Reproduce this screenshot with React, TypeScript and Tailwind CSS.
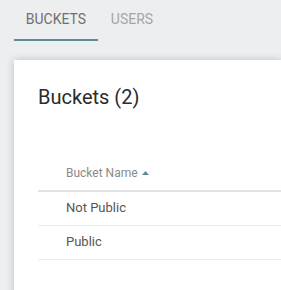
export default function App() {
  const rows = ["Not Public", "Public"];
  return (
    <div className="h-[290px] w-[281px] overflow-hidden bg-[#eceeef] font-['Roboto',sans-serif]">
      <div className="flex pl-[14px]">
        <div className="flex h-[41px] w-[84px] items-center justify-center border-b-2 border-[#5f8b96] text-[14px] text-[#707070]">
          BUCKETS
        </div>
        <div className="flex h-[41px] w-[68px] items-center justify-center pb-[2px] text-[14px] text-[#a6a6a6]">
          USERS
        </div>
      </div>
      <div className="ml-[14px] mt-[19px] h-[260px] bg-white pl-[24px] shadow-[0_0_8px_rgba(0,0,0,0.2)]">
        <h2 className="pt-[25px] text-[20px] leading-[24px] text-[#2b2b2b]">Buckets (2)</h2>
        <div className="mt-[50px]">
          <div className="flex h-[33px] items-center gap-[4px] border-b-2 border-[#e2e2e2] pb-[3px] pl-[28px] text-[12px] text-[#8a8a8a]">
            Bucket Name
            <svg width="7" height="4" viewBox="0 0 7 4">
              <path d="M0 4 L3.5 0 L7 4 Z" fill="#5f8b96" />
            </svg>
          </div>
          {rows.map((r) => (
            <div
              key={r}
              className="flex h-[34px] items-center border-b border-[#ececec] pb-[2px] pl-[28px] text-[13px] text-[#555]"
            >
              {r}
            </div>
          ))}
        </div>
      </div>
    </div>
  );
}
